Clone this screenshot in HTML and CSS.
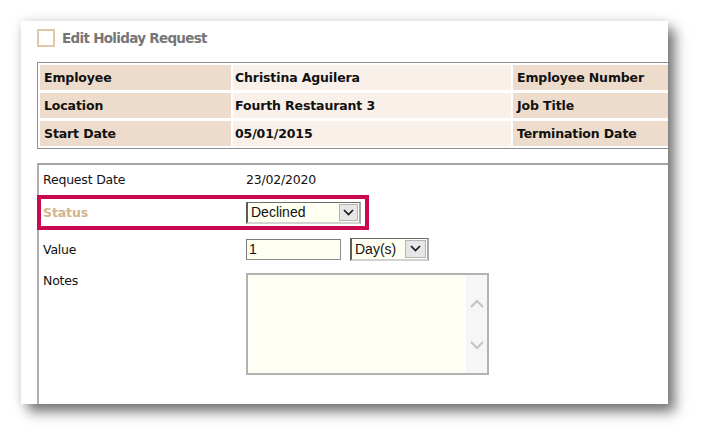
FILE: index.html
```html
<!DOCTYPE html>
<html>
<head>
<meta charset="utf-8">
<link rel="stylesheet" href="styles.css">
</head>
<body>
<div class="card">
  <div class="title">
    <span class="chk"></span>
    <span class="title-text">Edit Holiday Request</span>
  </div>
  <div class="info">
    <div class="lbl">Employee</div><div class="val">Christina Aguilera</div><div class="lbl">Employee Number</div><div class="val"></div>
    <div class="lbl">Location</div><div class="val">Fourth Restaurant 3</div><div class="lbl">Job Title</div><div class="val"></div>
    <div class="lbl">Start Date</div><div class="val">05/01/2015</div><div class="lbl">Termination Date</div><div class="val"></div>
  </div>
  <div class="form">
    <div class="row r1">
      <div class="flabel">Request Date</div>
      <div class="fval">23/02/2020</div>
    </div>
    <div class="status">
      <div class="flabel status-lbl">Status</div>
      <div class="select sel-status">
        <span class="sel-text">Declined</span>
        <span class="sel-btn"><svg width="11" height="7" viewBox="0 0 11 7"><path d="M1 1 L5.5 5.5 L10 1" fill="none" stroke="#1a1a1a" stroke-width="1.7"/></svg></span>
      </div>
    </div>
    <div class="row r3">
      <div class="flabel">Value</div>
      <div class="input">1</div>
      <div class="select sel-unit">
        <span class="sel-text">Day(s)</span>
        <span class="sel-btn"><svg width="11" height="7" viewBox="0 0 11 7"><path d="M1 1 L5.5 5.5 L10 1" fill="none" stroke="#1a1a1a" stroke-width="1.7"/></svg></span>
      </div>
    </div>
    <div class="row notes">
      <div class="flabel">Notes</div>
      <div class="textarea">
        <div class="ta-body"></div>
        <div class="ta-scroll">
          <svg class="up" width="14" height="9" viewBox="0 0 14 9"><path d="M1 8 L7 2 L13 8" fill="none" stroke="#c4c4c4" stroke-width="2"/></svg>
          <svg class="down" width="14" height="9" viewBox="0 0 14 9"><path d="M1 1 L7 7 L13 1" fill="none" stroke="#c4c4c4" stroke-width="2"/></svg>
        </div>
      </div>
    </div>
  </div>
</div>
</body>
</html>
```

FILE: styles.css
```css
html, body {
  margin: 0;
  padding: 0;
  background: #ffffff;
}
body {
  width: 708px;
  height: 441px;
  overflow: hidden;
  font-family: "DejaVu Sans", Verdana, sans-serif;
  color: #111;
}
.card {
  margin: 21px 0 0 21px;
  width: 647px;
  height: 383px;
  background: #fff;
  box-sizing: border-box;
  padding: 8px 0 0 16px;
  overflow: hidden;
  display: flex;
  flex-direction: column;
  box-shadow: 7px 8px 12px rgba(0, 0, 0, 0.52), 0 0 10px rgba(0, 0, 0, 0.12);
}
.title {
  display: flex;
  align-items: center;
  gap: 7px;
  height: 18px;
}
.chk {
  width: 18px;
  height: 18px;
  box-sizing: border-box;
  border: 2px solid #e3c7a9;
  background: #fff;
}
.title-text {
  font-weight: bold;
  font-size: 13.5px;
  letter-spacing: -0.7px;
  color: #767676;
}
.info {
  margin-top: 15px;
  align-self: flex-start;
  border: 1px solid #8e8e8e;
  padding: 2px;
  display: grid;
  grid-template-columns: 191px 278px 191px 200px;
  gap: 3px 2px;
  background: #fff;
}
.info > div {
  height: 25px;
  display: flex;
  align-items: center;
  font-weight: bold;
  font-size: 12.5px;
  letter-spacing: -0.12px;
  color: #111;
  white-space: nowrap;
}
.lbl {
  background: #eddccb;
  padding-left: 4px;
}
.val {
  background: #f9f0ea;
  padding-left: 2px;
}
.form {
  margin-top: 14px;
  flex: 1;
  border-top: 2px solid #a3a3a3;
  border-left: 2px solid #b0b0b0;
  margin-right: -20px;
  font-size: 12.5px;
  letter-spacing: -0.2px;
  color: #111;
}
.row {
  display: flex;
  align-items: center;
  height: 28px;
}
.flabel {
  width: 207px;
  flex: none;
  box-sizing: border-box;
  padding-left: 4px;
}
.status {
  margin-top: 2px;
  margin-left: -2px;
  width: 332px;
  height: 35px;
  box-sizing: border-box;
  border: 4px solid #c8094f;
  display: flex;
  align-items: center;
}
.status-lbl {
  width: 205px;
  padding-left: 2px;
  font-weight: bold;
  font-size: 12.5px;
  letter-spacing: -0.12px;
  color: #d3b48d;
}
.select {
  box-sizing: border-box;
  display: flex;
  align-items: center;
  background: #fffff1;
  border-left: 2px solid #5c5c5c;
  border-top: 1px solid #6e6e6e;
  border-right: 2px solid #a8a8a8;
  border-bottom: 2px solid #d2d2d2;
  font-family: "Liberation Sans", Arial, sans-serif;
  font-size: 14px;
  letter-spacing: 0;
  color: #111;
}
.sel-text {
  flex: 1;
  padding-left: 3px;
  line-height: 16px;
}
.sel-btn {
  width: 19px;
  height: 17px;
  box-sizing: border-box;
  border: 1px solid #b4b4b4;
  background: #e6e6e6;
  display: flex;
  align-items: center;
  justify-content: center;
  margin-right: 1px;
}
.sel-status {
  width: 115px;
  height: 22px;
}
.r3 {
  margin-top: 5px;
}
.input {
  width: 95px;
  height: 21px;
  box-sizing: border-box;
  border: 1px solid #8c8c8c;
  border-top-color: #7a7a7a;
  border-left-color: #7a7a7a;
  background: #fffff1;
  font-family: "Liberation Sans", Arial, sans-serif;
  font-size: 14px;
  letter-spacing: 0;
  line-height: 19px;
  padding-left: 2px;
}
.sel-unit {
  margin-left: 9px;
  width: 79px;
  height: 23px;
}
.sel-unit .sel-btn {
  width: 21px;
  height: 18px;
}
.notes {
  margin-top: 10px;
  height: auto;
  align-items: flex-start;
}
.notes .flabel {
  line-height: 16px;
}
.textarea {
  width: 243px;
  height: 102px;
  box-sizing: border-box;
  border: 2px solid #b3b3b3;
  display: flex;
  background: #fffff5;
}
.ta-body {
  flex: 1;
  background: #fffff5;
}
.ta-scroll {
  width: 21px;
  background: #f6f6f6;
  display: flex;
  flex-direction: column;
  align-items: center;
  padding-top: 24px;
  box-sizing: border-box;
}
.ta-scroll .down {
  margin-top: 33px;
}
```
